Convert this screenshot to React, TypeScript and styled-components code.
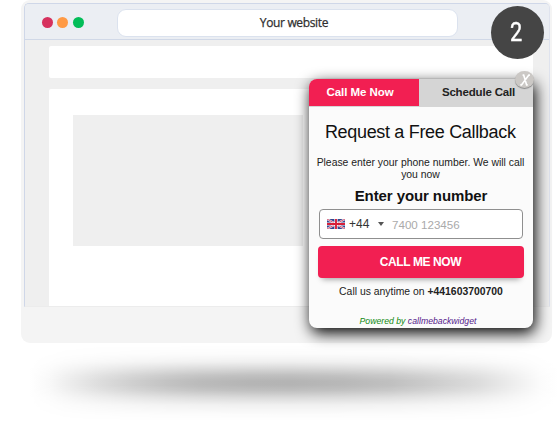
import React from 'react';
import styled, { createGlobalStyle } from 'styled-components';

const Global = createGlobalStyle`
  * { box-sizing: border-box; }
  body { margin: 0; background: #fff; overflow: hidden; font-family: "Liberation Sans", Arial, sans-serif; }
`;

const Stage = styled.main`
  position: relative;
  width: 560px;
  height: 424px;
  padding-left: 21px;
  overflow: hidden;
`;

const Device = styled.div`
  width: 531px;
  height: 343px;
  padding: 3px 2px 0 3px;
  background: #f4f4f4;
  border-radius: 9px;
`;

const Browser = styled.section`
  height: 304px;
  display: flex;
  flex-direction: column;
  background: #efefef;
  border: 1px solid #cfd7e8;
  border-right-color: #dfe3ee;
  border-bottom-color: #ececec;
  border-radius: 5px 5px 0 0;
  overflow: hidden;
`;

const TitleBar = styled.header`
  flex: none;
  display: flex;
  align-items: center;
  height: 36px;
  padding: 2px 0 0 16.5px;
  background: #ebeef3;
  border-bottom: 1px solid #d0d8e7;
`;

const Lights = styled.div`
  display: flex;
  gap: 4.4px;
  width: 75px;
`;

const Light = styled.span<{ $color: string }>`
  width: 11.3px;
  height: 11.3px;
  border-radius: 50%;
  background: ${p => p.$color};
`;

const AddressBar = styled.div`
  display: flex;
  align-items: center;
  justify-content: center;
  width: 341px;
  height: 28px;
  padding-left: 14px;
  border: 1px solid #dbe2ee;
  border-radius: 9px;
  background: #fff;
  color: #2f2f2f;
  font: 12px "Open Sans", sans-serif;
  letter-spacing: -0.35px;
  -webkit-text-stroke: 0.25px #2f2f2f;
`;

const PageArea = styled.div`
  flex: 1;
  display: flex;
  flex-direction: column;
  gap: 11px;
  padding: 6px 16px 0 24.3px;
`;

const Banner = styled.div`
  height: 32px;
  background: #fff;
  border-radius: 2px;
`;

const Article = styled.div`
  flex: 1;
  padding: 26px 23.7px;
  background: #fff;
  border-radius: 2px 2px 0 0;
`;

const Placeholder = styled.div`
  width: 230px;
  height: 131px;
  background: #efefef;
`;

const GroundShadow = styled.div`
  position: absolute;
  left: 30px;
  top: 345px;
  width: 528px;
  height: 76px;
  background: linear-gradient(90deg, #fff 0, #f8f8f8 20px, #eee 37px, #ddd 70px, #cfcfcf 103px, #c3c3c3 137px, #bbb 170px, #b5b5b5 220px, #b4b4b4 260px, #b8b8b8 310px, #c0c0c0 360px, #ccc 400px, #ddd 450px, #ececec 480px, #fbfbfb 510px, #fff 528px);
  mask-image: linear-gradient(transparent, rgba(0,0,0,.05) 12%, rgba(0,0,0,.2) 22%, rgba(0,0,0,.52) 31%, rgba(0,0,0,.85) 40%, #000 47%, #000 53%, rgba(0,0,0,.85) 60%, rgba(0,0,0,.5) 69%, rgba(0,0,0,.2) 79%, rgba(0,0,0,.05) 91%, transparent);
`;

const StepBadge = styled.div`
  position: absolute;
  left: 491px;
  top: 6px;
  width: 53px;
  height: 53px;
  display: flex;
  align-items: center;
  justify-content: center;
  padding-right: 3px;
  border-radius: 50%;
  background: #454545;
  color: #fff;
  font: 25px/1 "Roboto", sans-serif;
`;

const StepNumber = styled.span`
  transform: scaleX(.87);
  -webkit-text-stroke: 0.4px #fff;
`;

const Widget = styled.aside`
  position: absolute;
  left: 309px;
  top: 79px;
  width: 224px;
  height: 249px;
  display: flex;
  flex-direction: column;
  align-items: center;
  background: #fbfbfb;
  border-radius: 8px 2px 8px 8px;
  box-shadow: 2px 5px 15px #000;
  color: #111;
`;

const Tabs = styled.nav`
  width: 100%;
  height: 28px;
  display: flex;
  background: #d5d5d5;
  border-radius: 8px 2px 0 0;
`;

const Tab = styled.button<{ $active?: boolean }>`
  width: ${p => (p.$active ? '110px' : '114px')};
  height: 27px;
  padding: 0 ${p => (p.$active ? '8px' : '0')} 1px ${p => (p.$active ? '0' : '5px')};
  border: 0;
  border-radius: ${p => (p.$active ? '8px 0 0 0' : '0')};
  background: ${p => (p.$active ? '#f21f52' : 'transparent')};
  color: ${p => (p.$active ? '#fff' : '#222')};
  font: bold 11.5px "Liberation Sans", sans-serif;
  letter-spacing: ${p => (p.$active ? '-0.05px' : '-0.17px')};
  white-space: nowrap;
`;

const Heading = styled.h1`
  margin: 15px 1.5px 0 0;
  font-size: 18px;
  line-height: 21px;
  font-weight: 400;
  letter-spacing: -0.32px;
  white-space: nowrap;
`;

const Message = styled.p`
  margin: 14px 1px 0 0;
  font-size: 10.4px;
  line-height: 12px;
  text-align: center;
  white-space: nowrap;
  color: #222;
`;

const Label = styled.h2`
  margin: 6px 0 0;
  font-size: 15px;
  line-height: 18px;
  letter-spacing: -0.09px;
  white-space: nowrap;
`;

const PhoneField = styled.div`
  flex: none;
  display: flex;
  align-items: center;
  width: 204px;
  height: 30px;
  margin-top: 4px;
  padding-left: 7px;
  border: 1px solid #8f8f8f;
  border-radius: 4px;
  background: #fff;
  font-size: 12px;
`;

const DialCode = styled.span`
  width: 29px;
  margin-left: 4px;
  color: #333;
`;

const Caret = styled.span`
  margin: 0 8px 0 0;
  border: 3px solid transparent;
  border-top: 4px solid #555;
  border-bottom: 0;
`;

const Sample = styled.span`
  color: #aaa;
  font-size: 11.6px;
`;

const CallButton = styled.button`
  flex: none;
  width: 206px;
  height: 32px;
  margin: 7px 0 0 -1px;
  padding: 0;
  border: 0;
  border-radius: 4px;
  background: #f21f52;
  box-shadow: 0 5px 6px -4px rgba(0, 0, 0, .4);
  color: #fff;
  font: bold 12px "Liberation Sans", sans-serif;
  letter-spacing: -0.4px;
`;

const Contact = styled.p`
  margin: 8px 0 0;
  font-size: 10.4px;
  line-height: 12px;
  white-space: nowrap;
  color: #222;
`;

const Credit = styled.p`
  margin: 18px 0 0;
  padding-right: 6px;
  font-size: 8.7px;
  line-height: 10px;
  font-style: italic;
  white-space: nowrap;
  color: #118a11;
  a { color: #551a8b; }
`;

const CloseButton = styled.button`
  position: absolute;
  left: 206px;
  top: -8px;
  width: 19px;
  height: 17px;
  padding: 0;
  display: grid;
  place-items: center;
  border: 0;
  border-radius: 50%;
  background: #cbc8c5;
  box-shadow: 0 1px 1px #8a8a8a;
`;

const Flag = () => (
  <svg width="18" height="10" viewBox="0 0 18 10">
    <rect width="18" height="10" fill="#34468f" />
    <path d="M0 0L18 10M18 0L0 10" stroke="#e9e3ee" strokeWidth="2" />
    <path d="M0 0L18 10M18 0L0 10" stroke="#d43a55" strokeWidth=".8" />
    <path d="M9 0V10M0 5H18" stroke="#fff" strokeWidth="3.2" />
    <path d="M9 0V10M0 5H18" stroke="#d71f39" strokeWidth="1.9" />
  </svg>
);

export default function App() {
  return (
    <Stage>
      <Global />
      <Device>
        <Browser>
          <TitleBar>
            <Lights>
              <Light $color="#d6315e" />
              <Light $color="#ff9a45" />
              <Light $color="#02bd58" />
            </Lights>
            <AddressBar>Your website</AddressBar>
          </TitleBar>
          <PageArea>
            <Banner />
            <Article><Placeholder /></Article>
          </PageArea>
        </Browser>
      </Device>
      <GroundShadow />
      <Widget>
        <Tabs>
          <Tab $active>Call Me Now</Tab>
          <Tab>Schedule Call</Tab>
        </Tabs>
        <Heading>Request a Free Callback</Heading>
        <Message>Please enter your phone number. We will call<br />you now</Message>
        <Label>Enter your number</Label>
        <PhoneField>
          <Flag />
          <DialCode>+44</DialCode>
          <Caret />
          <Sample>7400 123456</Sample>
        </PhoneField>
        <CallButton>CALL ME NOW</CallButton>
        <Contact>Call us anytime on <b>+441603700700</b></Contact>
        <Credit>Powered by <a>callmebackwidget</a></Credit>
        <CloseButton aria-label="Close">
          <svg width="12" height="12" viewBox="0 0 11 11" fill="none" stroke="#fff" strokeWidth="1.5">
            <path d="M3.3 1H4.3L7 10H8M10 1H9L2.3 10H1.2" />
          </svg>
        </CloseButton>
      </Widget>
      <StepBadge><StepNumber>2</StepNumber></StepBadge>
    </Stage>
  );
}
